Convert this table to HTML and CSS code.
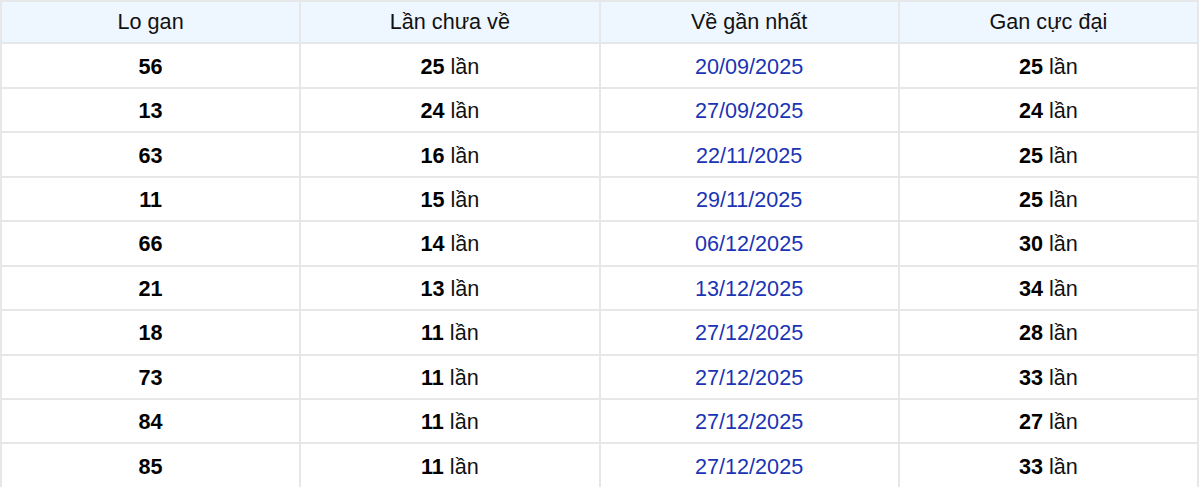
FILE: index.html
```html
<!DOCTYPE html>
<html lang="vi">
<head>
<meta charset="utf-8">
<link rel="stylesheet" href="styles.css">
</head>
<body>
<table class="gan">
  <thead>
    <tr><th>Lo gan</th><th>Lần chưa về</th><th>Về gần nhất</th><th>Gan cực đại</th></tr>
  </thead>
  <tbody>
    <tr><td><b>56</b></td><td><b>25</b> lần</td><td class="date">20/09/2025</td><td><b>25</b> lần</td></tr>
    <tr><td><b>13</b></td><td><b>24</b> lần</td><td class="date">27/09/2025</td><td><b>24</b> lần</td></tr>
    <tr><td><b>63</b></td><td><b>16</b> lần</td><td class="date">22/11/2025</td><td><b>25</b> lần</td></tr>
    <tr><td><b>11</b></td><td><b>15</b> lần</td><td class="date">29/11/2025</td><td><b>25</b> lần</td></tr>
    <tr><td><b>66</b></td><td><b>14</b> lần</td><td class="date">06/12/2025</td><td><b>30</b> lần</td></tr>
    <tr><td><b>21</b></td><td><b>13</b> lần</td><td class="date">13/12/2025</td><td><b>34</b> lần</td></tr>
    <tr><td><b>18</b></td><td><b>11</b> lần</td><td class="date">27/12/2025</td><td><b>28</b> lần</td></tr>
    <tr><td><b>73</b></td><td><b>11</b> lần</td><td class="date">27/12/2025</td><td><b>33</b> lần</td></tr>
    <tr><td><b>84</b></td><td><b>11</b> lần</td><td class="date">27/12/2025</td><td><b>27</b> lần</td></tr>
    <tr><td><b>85</b></td><td><b>11</b> lần</td><td class="date">27/12/2025</td><td><b>33</b> lần</td></tr>
  </tbody>
</table>
</body>
</html>
```
FILE: styles.css
```css
html, body {
  margin: 0;
  padding: 0;
  background: #ffffff;
}
body {
  font-family: "Liberation Sans", Arial, sans-serif;
  color: #111111;
}
.gan {
  width: 1199px;
  border-collapse: collapse;
  table-layout: fixed;
  font-size: 21.6px;
  line-height: 24.84px;
}
.gan th, .gan td {
  border: 2px solid #e6e7e9;
  padding: 10.3px 8px 7.3px;
  text-align: center;
}
.gan th {
  background: #eef6ff;
  font-weight: normal;
  color: #111111;
  padding-top: 7.8px;
  padding-bottom: 7.8px;
}
.gan b {
  font-weight: bold;
  color: #000000;
}
.gan .date {
  color: #1a34b4;
}
```
